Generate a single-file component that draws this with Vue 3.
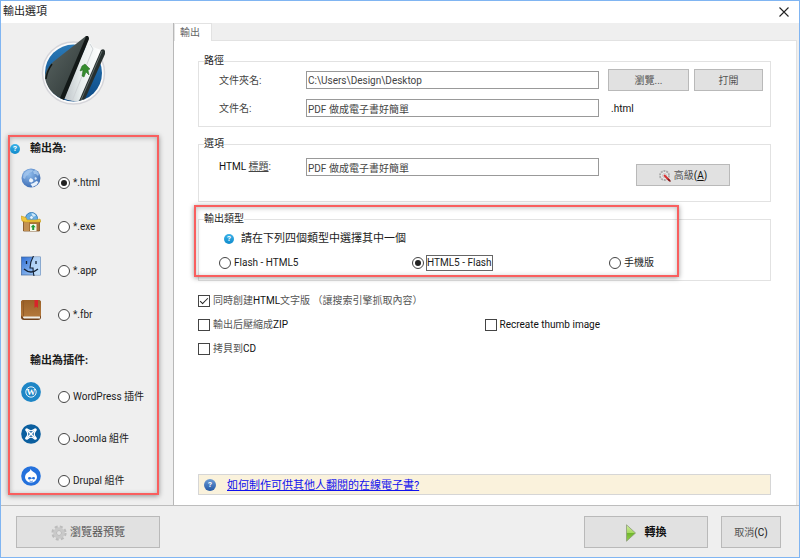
<template>
  <div class="dialog" lang="zh-Hant">
    <svg class="sprite" width="0" height="0" aria-hidden="true">
      <defs>
        <linearGradient id="sky" x1="0" y1="0" x2="0" y2="1">
          <stop offset="0" stop-color="#2b7ab8" />
          <stop offset="1" stop-color="#0c4a86" />
        </linearGradient>
        <linearGradient id="cover" x1="0" y1="0" x2="1" y2="1">
          <stop offset="0" stop-color="#5d6866" />
          <stop offset="1" stop-color="#2a3332" />
        </linearGradient>
        <linearGradient id="pages" x1="0" y1="0" x2="1" y2="0">
          <stop offset="0" stop-color="#b7bdc2" />
          <stop offset="0.5" stop-color="#e9efef" />
          <stop offset="1" stop-color="#ffffff" />
        </linearGradient>
        <radialGradient id="earth" cx="0.4" cy="0.3" r="0.7">
          <stop offset="0" stop-color="#8fbcec" />
          <stop offset="1" stop-color="#3f6fb6" />
        </radialGradient>
        <linearGradient id="finder" x1="0" y1="0" x2="1" y2="1">
          <stop offset="0" stop-color="#2f6fd6" />
          <stop offset="1" stop-color="#b4d8fa" />
        </linearGradient>
        <linearGradient id="leather" x1="0" y1="0" x2="0" y2="1">
          <stop offset="0" stop-color="#9a6128" />
          <stop offset="1" stop-color="#b4793c" />
        </linearGradient>
        <linearGradient id="play" x1="0" y1="0" x2="0" y2="1">
          <stop offset="0" stop-color="#d2efa0" />
          <stop offset="0.5" stop-color="#a4d85e" />
          <stop offset="0.5" stop-color="#6fb52c" />
          <stop offset="1" stop-color="#93d04a" />
        </linearGradient>
      </defs>

      <symbol id="icon-html" viewBox="0 0 20 20">
        <circle cx="10" cy="10" r="9.5" fill="url(#earth)" />
        <path d="M2.500 6Q5 2 9 1.500l3 .5-1 2-3 1-1 2-2 1-1 3-2-1z" fill="#a9cbef" opacity=".7" />
        <path d="M12 3l3-1 3 4-1 2-2-2-2 0z" fill="#b6d4f3" opacity=".7" />
        <path d="M8 12l1.500-2 2 1 1 2-2 1.500-2-.5z" fill="#eef5fd" />
        <path d="M9.500 16l3-1 3-2 2 1-2 3-4 2z" fill="#e8f1fb" />
        <path d="M14 9l2 1-1 2-1.500-1z" fill="#d5e6f9" />
      </symbol>

      <symbol id="icon-exe" viewBox="0 0 20 20">
        <circle cx="10.5" cy="6.5" r="6" fill="#67aee2" stroke="#3b80bd" />
        <path d="M10.500 1a5.500 5.500 0 0 1 4.500 2.500l-3.500 2z" fill="#cbe8fb" />
        <circle cx="10.500" cy="5.500" r="1.800" fill="#eef7fd" stroke="#4a8dc6" stroke-width=".6" />
        <path d="M2.500 9h16v10h-16z" fill="#a87338" stroke="#7a4c1c" stroke-width=".8" />
        <path d="M3 10h5v9H3z" fill="#c39154" />
        <path d="M0 4l5 1.500L6 8h9l4-1 1 3H4L1 9z" fill="#f0c63c" stroke="#c39a1c" stroke-width=".6" />
        <rect x="9" y="12" width="6.500" height="7" fill="#f5f8ea" />
        <path d="M12.200 12.500l2.500 2.700h-1.500V18h-2v-2.800H9.700z" fill="#1e9a35" />
      </symbol>

      <symbol id="icon-app" viewBox="0 0 20 20">
        <rect x=".5" y="1" width="19" height="18" fill="url(#finder)" stroke="#3f679f" stroke-width=".7" />
        <path d="M12 1h7.500v18H12.500l-.5-7H9q0-6 3-11z" fill="#c7e2fa" opacity=".75" />
        <path d="M12.500 0Q9 6 9 12h3q0 4 1 8" fill="none" stroke="#132033" stroke-width="1.100" />
        <path d="M5.500 5v3M15 5v3M3 13q7 6 14 0" fill="none" stroke="#132033" stroke-width="1.300" />
      </symbol>

      <symbol id="icon-fbr" viewBox="0 0 20 20">
        <rect x="0" y="0" width="20" height="20" rx="3" fill="#70401a" />
        <rect x="0" y="0" width="20" height="17" rx="2.500" fill="url(#leather)" />
        <path d="M2.500 16.500H19v2H3q-2-1-.5-2z" fill="#f0eee8" />
        <path d="M2.500 1v15" stroke="#925a26" stroke-width="1" />
        <path d="M13.500 0h3.500v8l-1.700-1.500L13.500 8z" fill="#d8232a" />
      </symbol>

      <symbol id="icon-wordpress" viewBox="0 0 20 20">
        <circle cx="10" cy="10" r="9.900" fill="#1e86c6" />
        <circle cx="10" cy="10" r="5.200" fill="none" stroke="#fff" stroke-width=".9" />
      </symbol>

      <symbol id="icon-joomla" viewBox="0 0 20 20">
        <circle cx="10" cy="10" r="9.800" fill="#0b5f9f" />
        <g fill="none" stroke="#fff" stroke-width="1.600">
          <path d="M6.500 6.500l7 7M13.500 6.500l-7 7" />
          <path d="M7 5.500q3 2.500 6 0M14.500 7q-2.500 3 0 6M7 14.500q3-2.500 6 0M5.500 7q2.500 3 0 6" stroke-width="1.200" />
        </g>
        <g fill="#fff">
          <circle cx="5.800" cy="5.800" r="1.600" />
          <circle cx="14.200" cy="5.800" r="1.600" />
          <circle cx="5.800" cy="14.200" r="1.600" />
          <circle cx="14.200" cy="14.200" r="1.600" />
        </g>
      </symbol>

      <symbol id="icon-drupal" viewBox="0 0 20 20">
        <circle cx="10" cy="10" r="9.800" fill="#2471dc" />
        <path d="M9.500 3q1 2 3 3 3.500 2 3.500 5.200a6 5.300 0 0 1-12 0Q4 8 7.500 6q2-1 2-3z" fill="#fff" />
        <path d="M7 12.500q0-1.500 1.600-1.400 1.100.1 2 1 1.400-1.200 2.400-1 1.300.3.900 1.600-.5 1.100-1.700.6l-1.500-.8-1.900 1q-1.700.3-1.800-1z" fill="#2471dc" />
        <path d="M8.500 15q1.800 1 3.500 0" fill="none" stroke="#2471dc" stroke-width=".7" />
      </symbol>
    </svg>

    <header class="titlebar">
      <h1>輸出選項</h1>
      <button class="close" type="button" aria-label="關閉">
        <svg viewBox="0 0 10 10" width="10" height="10">
          <path d="M.5.5l9 9M9.500.5l-9 9" fill="none" stroke="#222" stroke-width="1.100" />
        </svg>
      </button>
    </header>

    <div class="body">
      <aside class="sidebar">
        <svg class="logo" viewBox="0 0 70 70" width="70" height="70">
          <circle cx="34.500" cy="37" r="31" fill="#fbfbfb" stroke="#d5d5da" stroke-width="1.500" />
          <circle cx="34.500" cy="37" r="28.500" fill="url(#sky)" />
          <path d="M50 4l4 7 8 3-18 50q-10 3-21-2z" fill="url(#pages)" />
          <path d="M51 8l3 5-21 52" fill="none" stroke="#cfd3d6" stroke-width="1" />
          <path d="M47 0L14 26Q6 34 6 41q2 15 17 22L49 3z" fill="url(#cover)" />
          <path d="M47 0q3-1 3 3L25 64l-4-2L46 3z" fill="#131918" />
          <path d="M7 43q1-8 6-15" fill="none" stroke="#131918" stroke-width="1.500" />
          <path d="M62 14q3-2 4 1v3L46 63l-6 2z" fill="#27302f" />
          <path d="M63 15L42 64" stroke="#606b69" stroke-width="1" />
          <path d="M46 28l5 5-2 1 1 5-3-3-2 5-2-1 1-6-3 1 2-5z" fill="#348c2e" stroke="#226420" stroke-width=".5" />
        </svg>

        <section class="targets marked">
          <h2>
            <span class="help">?</span>
            <span class="heading">輸出為:</span>
          </h2>
          <label v-for="item in formats" :key="item.id" class="target">
            <svg width="20" height="20"><use :href="'#icon-' + item.id" /></svg>
            <input v-model="target" type="radio" name="target" :value="item.id" />
            <span>{{ item.label }}</span>
          </label>
          <h2 class="plugins-title"><span class="heading">輸出為插件:</span></h2>
          <label v-for="item in plugins" :key="item.id" class="target plugin">
            <svg width="20" height="20">
              <use :href="'#icon-' + item.id" />
              <text v-if="item.id === 'wordpress'" class="mark" x="10" y="13" text-anchor="middle">W</text>
            </svg>
            <input v-model="target" type="radio" name="target" :value="item.id" />
            <span>{{ item.label }}</span>
          </label>
        </section>
      </aside>

      <main class="main">
        <nav class="tabs">
          <button class="tab" type="button">輸出</button>
        </nav>

        <div class="panel">
          <fieldset>
            <legend>路徑</legend>
            <div class="form-row">
              <label for="folder">文件夾名:</label>
              <input id="folder" v-model="folder" type="text" />
              <div class="actions">
                <button class="btn browse" type="button">瀏覽...</button>
                <button class="btn open" type="button">打開</button>
              </div>
            </div>
            <div class="form-row">
              <label for="file">文件名:</label>
              <input id="file" v-model="file" type="text" />
              <span class="suffix">.html</span>
            </div>
          </fieldset>

          <fieldset class="options">
            <legend>選項</legend>
            <div class="form-row">
              <label for="title"><span class="latin">HTML</span> <u>標題</u>:</label>
              <input id="title" v-model="title" type="text" />
              <button class="btn advanced" type="button">
                <svg viewBox="0 0 12 12" width="12" height="12">
                  <circle cx="5.500" cy="5.500" r="4.500" fill="#e8e8e8" stroke="#aaa" stroke-width="1.800" stroke-dasharray="2 .8" />
                  <circle cx="5.500" cy="5.500" r="2" fill="#f6f6f6" stroke="#aaa" stroke-width=".6" />
                  <path d="M5 5l5.500 5.500" stroke="#d63131" stroke-width="2" />
                  <path d="M9 9l2.500 2.500" stroke="#7c1d1d" stroke-width="1.500" />
                </svg>
                <span>高級<span class="latin">(<u>A</u>)</span></span>
              </button>
            </div>
          </fieldset>

          <fieldset class="types">
            <legend>輸出類型</legend>
            <p class="hint">
              <span class="help">?</span>
              請在下列四個類型中選擇其中一個
            </p>
            <div class="type-row">
              <label v-for="item in types" :key="item.id">
                <input v-model="type" type="radio" name="type" :value="item.id" />
                <span :class="{ focused: type === item.id }">{{ item.label }}</span>
              </label>
            </div>
            <div class="type-mark marked"></div>
          </fieldset>

          <div class="checks">
            <label class="wide">
              <input v-model="textVersion" type="checkbox" />
              <span>同時創建<span class="latin">HTML</span>文字版 （讓搜索引擎抓取內容）</span>
            </label>
            <label>
              <input v-model="zip" type="checkbox" />
              <span>輸出后壓縮成<span class="latin">ZIP</span></span>
            </label>
            <label>
              <input v-model="thumbs" type="checkbox" />
              <span class="latin">Recreate thumb image</span>
            </label>
            <label>
              <input v-model="burn" type="checkbox" />
              <span>拷貝到<span class="latin">CD</span></span>
            </label>
          </div>

          <div class="tip">
            <span class="help dark">?</span>
            <a href="#">如何制作可供其他人翻閱的在線電子書?</a>
          </div>
        </div>
      </main>
    </div>

    <footer class="footer">
      <button class="btn preview" type="button">
        <svg viewBox="0 0 16 16" width="16" height="16">
          <g fill="none" stroke="#bcbcbc">
            <circle cx="8" cy="8" r="6.400" stroke-width="2.400" stroke-dasharray="2.900 2.130" />
            <circle cx="8" cy="8" r="4.300" stroke="#c9c9c9" stroke-width="3" />
            <circle cx="8" cy="8" r="2.500" stroke="#b2b2b2" stroke-width=".8" />
          </g>
        </svg>
        瀏覽器預覽
      </button>
      <button class="btn convert" type="button">
        <svg viewBox="0 0 10 18" width="10" height="18">
          <path d="M.5.8l9 8.200-9 8.200z" fill="url(#play)" stroke="#8b9a78" stroke-width=".8" />
        </svg>
        轉換
      </button>
      <button class="btn cancel" type="button"><span>取消<span class="latin">(C)</span></span></button>
    </footer>
  </div>
</template>

<script setup>
import { ref } from 'vue'

const formats = [
  { id: 'html', label: '*.html' },
  { id: 'exe', label: '*.exe' },
  { id: 'app', label: '*.app' },
  { id: 'fbr', label: '*.fbr' }
]

const plugins = [
  { id: 'wordpress', label: 'WordPress 插件' },
  { id: 'joomla', label: 'Joomla 組件' },
  { id: 'drupal', label: 'Drupal 組件' }
]

const types = [
  { id: 'flash-html5', label: 'Flash - HTML5' },
  { id: 'html5-flash', label: 'HTML5 - Flash' },
  { id: 'mobile', label: '手機版' }
]

const target = ref('html')
const type = ref('html5-flash')
const folder = ref('C:\\Users\\Design\\Desktop')
const file = ref('PDF 做成電子書好簡單')
const title = ref('PDF 做成電子書好簡單')
const textVersion = ref(true)
const zip = ref(false)
const thumbs = ref(false)
const burn = ref(false)
</script>

<style>
body {
  margin: 0;
}
</style>

<style scoped>
.dialog {
  display: flex;
  flex-direction: column;
  min-height: 100vh;
  box-sizing: border-box;
  border: 1px solid #80b5f2;
  background: #efefef;
  color: #1c1c1c;
  font-family: Roboto, 'Noto Sans CJK TC', sans-serif;
  font-size: 10px;
  line-height: 14px;
}

.dialog *,
.dialog *::before {
  box-sizing: border-box;
}

.sprite {
  position: absolute;
}

svg {
  display: block;
  flex: none;
}

h1,
h2,
p {
  margin: 0;
  font-size: 11px;
}

button,
input {
  font: inherit;
  color: inherit;
}

.latin {
  color: #111;
}

.help {
  flex: none;
  width: 10px;
  height: 10px;
  border-radius: 50%;
  background: linear-gradient(#3bb2e8, #0f8acb);
  color: #fff;
  font-size: 8px;
  font-weight: bold;
  line-height: 10px;
  text-align: center;
}

.help.dark {
  width: 12px;
  height: 12px;
  background: linear-gradient(#6d9cd6, #2458a4);
  line-height: 12px;
}

.mark {
  fill: #fff;
  font-family: 'Liberation Serif', serif;
  font-size: 9px;
  font-weight: bold;
}

.titlebar {
  display: flex;
  align-items: center;
  justify-content: space-between;
  height: 22px;
  padding: 0 5px 0 2px;
  background: #fff;
}

.titlebar h1 {
  font-weight: normal;
}

.close {
  padding: 5px;
  border: 0;
  background: none;
}

.body {
  display: flex;
  flex: 1;
}

.sidebar {
  flex: none;
  width: 172px;
  padding: 13px 14px 8px 7px;
}

.logo {
  margin: 0 0 29px 31px;
}

.marked {
  border: 2px solid #f95f5f;
  box-shadow: 0 1px 5px rgba(0, 0, 0, 0.4), inset 0 1px 5px rgba(0, 0, 0, 0.25);
}

.targets h2 {
  display: grid;
  grid-template-columns: 20px auto;
  align-items: center;
  height: 23px;
  margin-bottom: 8px;
}

.targets .heading {
  grid-column: 2;
}

.targets .plugins-title {
  height: 34px;
  margin-bottom: 4px;
}

.target {
  display: grid;
  grid-template-columns: 20px 26px auto;
  align-items: start;
  column-gap: 3px;
  height: 27px;
  margin-bottom: 17px;
  padding-left: 11px;
}

.target > span {
  align-self: end;
  padding-bottom: 5px;
}

.plugin {
  margin-bottom: 15px;
}

.plugin:last-child {
  margin-bottom: 0;
}

input[type='radio'],
input[type='checkbox'] {
  flex: none;
  appearance: none;
  width: 12px;
  height: 12px;
  margin: 0;
  border: 1px solid #444;
  background: #fff;
}

input[type='radio'] {
  display: grid;
  place-content: center;
  border-radius: 50%;
}

.target input[type='radio'] {
  align-self: end;
  justify-self: end;
  margin-bottom: 6px;
}

input[type='radio']:checked::before {
  content: '';
  width: 6px;
  height: 6px;
  border-radius: 50%;
  background: #222;
}

input[type='checkbox']:checked::before {
  content: '';
  display: block;
  width: 8px;
  height: 4px;
  margin: 2px 1px;
  border: solid #222;
  border-width: 0 0 1px 1px;
  transform: rotate(-45deg);
}

.main {
  display: flex;
  flex: 1;
  flex-direction: column;
  min-width: 0;
  padding-right: 2px;
  border-left: 1px solid #b8b8b8;
}

.tabs {
  display: flex;
  height: 18px;
  border-bottom: 1px solid #e2e2e2;
}

.tab {
  width: 38px;
  height: 19px;
  padding: 0 6px 0 0;
  border: 1px solid #e2e2e2;
  border-bottom: 0;
  background: #fff;
  color: #666;
}

.panel {
  flex: 1;
  padding: 13px 25px 10px 24px;
  border-right: 1px solid #e2e2e2;
  background: #fff;
}

fieldset {
  position: relative;
  min-width: 0;
  height: 73px;
  margin: 0 0 10px;
  padding: 1px 7px 0 20px;
  border: 1px solid #e2e2e2;
}

legend {
  margin-left: -15px;
  padding: 0;
}

.options {
  height: 65px;
  padding-top: 7px;
}

.types {
  height: 69px;
  padding-top: 6px;
}

.form-row {
  display: grid;
  grid-template-columns: 87px 1fr 164px;
  align-items: center;
  height: 22px;
  margin-bottom: 6px;
  color: #444;
}

.form-row label,
.suffix {
  padding-top: 2px;
}

.form-row input {
  width: 100%;
  height: 18px;
  padding: 0 1px;
  border: 1px solid #999;
  background: #fff;
}

.form-row .actions,
.form-row .suffix {
  margin-left: 9px;
}

.suffix {
  padding-left: 3px;
  color: #111;
}

.actions {
  display: flex;
  gap: 5px;
}

.btn {
  display: flex;
  align-items: center;
  justify-content: center;
  gap: 3px;
  height: 22px;
  padding: 2px 0 0;
  border: 1px solid #b9b9b9;
  background: #e1e1e1;
  color: #555;
}

.browse {
  width: 81px;
}

.open {
  width: 69px;
}

.options .form-row {
  align-items: start;
  height: 30px;
}

.form-row .advanced {
  width: 94px;
  margin: 6px 0 0 37px;
}

.hint {
  display: flex;
  align-items: center;
  gap: 7px;
  padding-left: 5px;
}

.type-row {
  display: grid;
  grid-template-columns: 193px 197px 1fr;
  align-items: center;
  margin-top: 10px;
}

.type-row label,
.checks label {
  display: flex;
  align-items: center;
  gap: 3px;
}

.focused {
  outline: 1px solid #666;
}

/* red frame drawn around the output type group */
.type-mark {
  position: absolute;
  inset: -15px 91px 3px -5px;
  pointer-events: none;
}

.types .type-mark {
  top: -21px;
}

.checks {
  display: grid;
  grid-template-columns: 1fr 1fr;
  row-gap: 10px;
  padding-top: 3px;
  color: #555;
}

.checks .wide {
  grid-column: span 2;
}

.tip {
  display: flex;
  align-items: center;
  gap: 11px;
  height: 21px;
  margin-top: 118px;
  padding: 0 5px;
  border: 1px solid #d6d6d6;
  background: #faf2dc;
  font-size: 11px;
}

.tip a {
  padding-top: 2px;
  color: #1010ee;
}

.footer {
  display: flex;
  align-items: center;
  gap: 13px;
  height: 52px;
  padding: 0 18px 0 15px;
  border-top: 1px solid #bdbdbd;
}

.footer .btn {
  height: 32px;
}

.footer .preview {
  width: 144px;
  margin-right: auto;
  font-size: 11px;
}

.footer .convert {
  gap: 9px;
  width: 124px;
  color: #111;
  font-size: 11px;
  font-weight: bold;
}

.footer .cancel {
  width: 60px;
}
</style>
